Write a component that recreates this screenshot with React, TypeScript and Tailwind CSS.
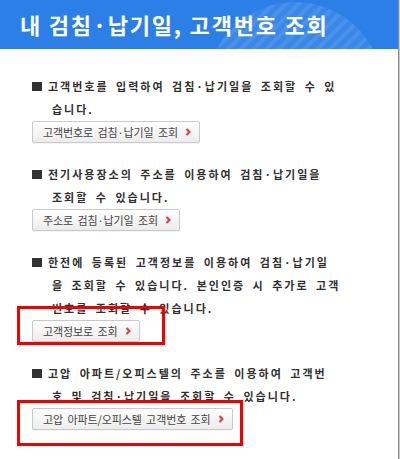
import React from "react";

type Item = {
  lines: string[];
  button: string;
  mark?: "a" | "b";
};

const items: Item[] = [
  {
    lines: ["고객번호를 입력하여 검침·납기일을 조회할 수 있", "습니다."],
    button: "고객번호로 검침·납기일 조회",
  },
  {
    lines: ["전기사용장소의 주소를 이용하여 검침·납기일을", "조회할 수 있습니다."],
    button: "주소로 검침·납기일 조회",
  },
  {
    lines: [
      "한전에 등록된 고객정보를 이용하여 검침·납기일",
      "을 조회할 수 있습니다. 본인인증 시 추가로 고객",
      "번호를 조회할 수 있습니다.",
    ],
    button: "고객정보로 조회",
    mark: "a",
  },
  {
    lines: ["고압 아파트/오피스텔의 주소를 이용하여 고객번", "호 및 검침·납기일을 조회할 수 있습니다."],
    button: "고압 아파트/오피스텔 고객번호 조회",
    mark: "b",
  },
];

function Chevron() {
  return (
    <svg width="6" height="8" viewBox="0 0 6 8" className="ml-[7px] shrink-0">
      <polyline points="1.5,1 4.5,4 1.5,7" fill="none" stroke="#e8372c" strokeWidth="2" />
    </svg>
  );
}

function LookupButton({ label, mark }: { label: string; mark?: "a" | "b" }) {
  return (
    <div className="relative self-start">
      <button className="flex h-[22px] items-center rounded-[2px] border border-[#c9c9c9] bg-[linear-gradient(180deg,#ffffff,#ececec)] pl-[10px] pr-[8px] text-[11px] tracking-[-0.1px] [word-spacing:2px] text-[#444] shadow-[0_1px_0_rgba(0,0,0,0.04)]">
        <span>{label}</span>
        <Chevron />
      </button>
      {mark === "a" ? (
        <span className="pointer-events-none absolute -left-[15px] -top-[14px] -right-[25px] -bottom-[3px] border-[3px] border-[#f40000]" />
      ) : null}
      {mark === "b" ? (
        <span className="pointer-events-none absolute -left-[15px] -top-[8px] -right-[10px] -bottom-[16px] border-[3px] border-[#f40000]" />
      ) : null}
    </div>
  );
}

function HeaderDeco() {
  return (
    <svg width="200" height="49" viewBox="0 0 200 49" className="absolute right-0 top-0">
      <defs>
        <pattern id="stripes" width="9" height="9" patternUnits="userSpaceOnUse" patternTransform="rotate(-45)">
          <rect width="9" height="4" fill="rgba(255,255,255,0.08)" />
        </pattern>
      </defs>
      <circle cx="97" cy="90" r="88" fill="rgba(255,255,255,0.07)" />
      <circle cx="97" cy="90" r="88" fill="url(#stripes)" />
    </svg>
  );
}

export default function App() {
  return (
    <div className="flex h-[459px] w-[400px] overflow-hidden bg-white font-['Noto_Sans_CJK_KR','Noto_Sans',sans-serif]">
      <div className="flex w-[398px] flex-col">
        <header className="relative h-[49px] shrink-0 overflow-hidden bg-[#2b7fe6]">
          <HeaderDeco />
          <h1 className="relative pl-[20px] text-[22px] font-bold leading-[49px] tracking-[1.8px] text-white">
            내 검침·납기일, 고객번호 조회
          </h1>
        </header>

        <div className="flex flex-col gap-[20px] px-[32px] pt-[26px]">
          {items.map((item) => (
            <section key={item.button} className="flex flex-col">
              {item.lines.map((line, i) => (
                <div
                  key={i}
                  className="flex h-[23px] items-center whitespace-nowrap text-[11px] font-bold tracking-[2px] [word-spacing:3px] text-[#2f2f2f]"
                >
                  {i === 0 ? (
                    <>
                      <span className="mr-[6px] inline-block h-[9px] w-[10px] bg-[#333]" />
                      <span>{line}</span>
                    </>
                  ) : (
                    <span className="pl-[20px]">{line}</span>
                  )}
                </div>
              ))}
              <LookupButton label={item.button} mark={item.mark} />
            </section>
          ))}
        </div>
      </div>
      <div className="w-[2px] shrink-0 border-l border-[#8a8a8a] bg-[#c8c8c8]" />
    </div>
  );
}
